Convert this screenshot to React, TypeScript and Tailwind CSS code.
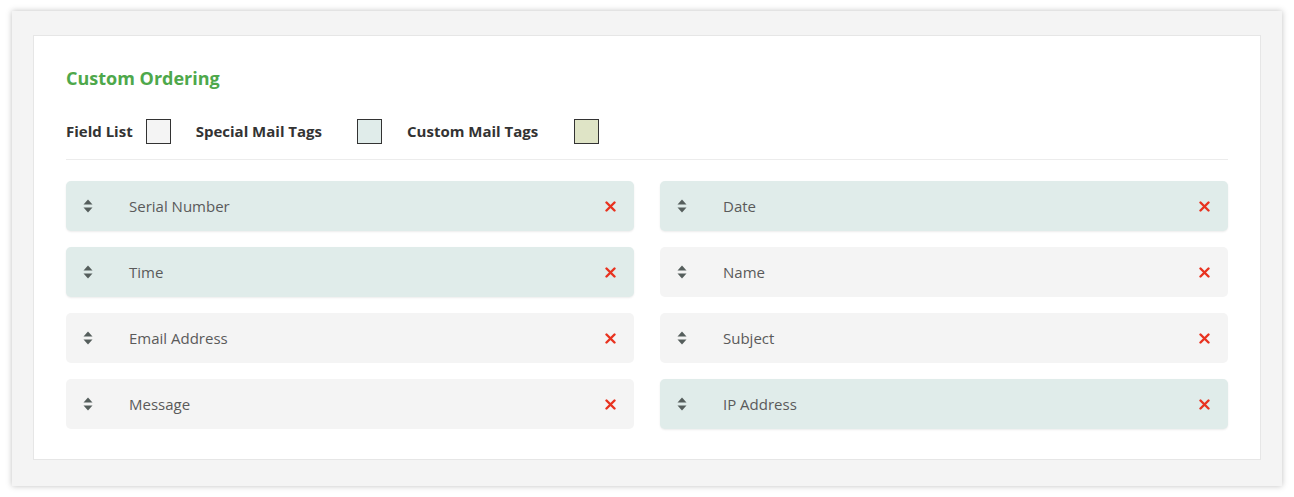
const fields = [
  { label: "Serial Number", tone: "special" },
  { label: "Date", tone: "special" },
  { label: "Time", tone: "special" },
  { label: "Name", tone: "field" },
  { label: "Email Address", tone: "field" },
  { label: "Subject", tone: "field" },
  { label: "Message", tone: "field" },
  { label: "IP Address", tone: "special" },
];

function SortIcon() {
  return (
    <svg width="10" height="14" viewBox="0 0 10 14" className="text-[#555e5c]">
      <path d="M5 0.5 L9.5 5.5 H0.5 Z" fill="currentColor" />
      <path d="M5 13.5 L9.5 8.5 H0.5 Z" fill="currentColor" />
    </svg>
  );
}

function RemoveIcon() {
  return (
    <svg width="11" height="11" viewBox="0 0 11 11">
      <path d="M1.5 1.5 L9.5 9.5 M9.5 1.5 L1.5 9.5" stroke="#e8321f" strokeWidth="2.4" strokeLinecap="round" />
    </svg>
  );
}

export default function App() {
  return (
    <div className="min-h-screen bg-white pt-[11px] px-[12px] font-['Open_Sans',sans-serif]">
      <div className="bg-[#f4f4f4] w-[1270px] pt-[24px] pb-[26px] px-[21px] shadow-[0_0_6px_rgba(0,0,0,0.25)]">
        <div className="bg-white border border-[#e6e6e6] pt-[30px] pb-[30px] pl-[32px] pr-[32px]">
          <h2 className="text-[18px] leading-[24px] font-bold text-[#4ea84b]">Custom Ordering</h2>

          <div className="mt-[29px] flex items-center h-[24px] text-[15px] font-bold text-[#333]">
            <span>Field List</span>
            <span className="ml-[13px] w-[25px] h-[25px] border border-[#333] bg-[#f4f4f4]" />
            <span className="ml-[25px]">Special Mail Tags</span>
            <span className="ml-[35px] w-[25px] h-[25px] border border-[#333] bg-[#e0ecea]" />
            <span className="ml-[25px]">Custom Mail Tags</span>
            <span className="ml-[36px] w-[25px] h-[25px] border border-[#333] bg-[#dfe4c6]" />
          </div>

          <div className="mt-[16px] border-t border-[#ececec]" />

          <div className="mt-[21px] grid grid-cols-2 gap-x-[26px] gap-y-[16px]">
            {fields.map((f) => (
              <div
                key={f.label}
                className={
                  f.tone === "special"
                    ? "h-[50px] rounded-[5px] bg-[#e0ecea] shadow-[0_1px_2px_rgba(0,0,0,0.08)] flex items-center pl-[17px] pr-[18px]"
                    : "h-[50px] rounded-[5px] bg-[#f4f4f4] flex items-center pl-[17px] pr-[18px]"
                }
              >
                <SortIcon />
                <span className="ml-[36px] text-[15px] text-[#5a5a5a]">{f.label}</span>
                <span className="ml-auto flex items-center">
                  <RemoveIcon />
                </span>
              </div>
            ))}
          </div>
        </div>
      </div>
    </div>
  );
}
